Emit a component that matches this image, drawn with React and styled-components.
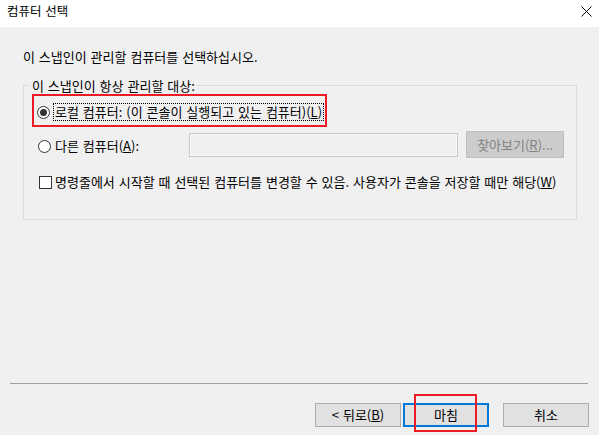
import React from 'react';
import styled, { createGlobalStyle } from 'styled-components';

const GlobalStyle = createGlobalStyle`
  html, body {
    margin: 0;
    padding: 0;
    background: #f0f0f0;
  }
  body {
    font-family: 'Noto Sans CJK KR', 'Malgun Gothic', sans-serif;
    font-size: 13px;
    word-spacing: 1px;
    color: #000;
  }
`;

const StyledWindow = styled.div`
  width: 599px;
  height: 435px;
  display: flex;
  flex-direction: column;
  background: #f0f0f0;
  overflow: hidden;
`;

const TitleBar = styled.div`
  height: 27px;
  flex: 0 0 27px;
  background: #fff;
  display: flex;
  align-items: center;
  justify-content: space-between;
  padding: 0 7px 5px 7px;
  box-sizing: border-box;
  font-size: 12.5px;
  line-height: 16px;
`;

const CloseIcon = styled.svg`
  width: 11px;
  height: 11px;
`;

const Body = styled.div`
  flex: 1;
  display: flex;
  flex-direction: column;
  padding: 0 22px 0 23px;
`;

const Instruction = styled.div`
  margin-top: 22px;
  line-height: 16px;
`;

const Group = styled.div`
  margin-top: 20px;
  height: 135px;
  box-sizing: border-box;
  border: 1px solid #dcdcdc;
  padding: 0 8px;
  display: flex;
  flex-direction: column;
  align-items: flex-start;
`;

const Legend = styled.div`
  margin: -8px 0 0 -2px;
  padding: 0 2px;
  line-height: 16px;
  background: #f0f0f0;
`;

// annotation box drawn around the focused option
const RedMark = styled.div`
  display: flex;
  align-items: center;
  border: 2px solid #ec1c24;
  padding: 7px 1px 4px 3px;
`;

const Radio = styled.span`
  width: 13px;
  height: 13px;
  flex: 0 0 13px;
  box-sizing: border-box;
  border: 1px solid #333;
  border-radius: 50%;
  background: #fff;
  display: inline-flex;
  align-items: center;
  justify-content: center;

  &::after {
    content: '';
    display: ${(p) => (p.$checked ? 'block' : 'none')};
    width: 7px;
    height: 7px;
    border-radius: 50%;
    background: #333;
  }
`;

const FocusLabel = styled.span`
  margin-left: 3px;
  border: 1px dotted #000;
  padding: 0 1px;
  line-height: 16px;
  white-space: nowrap;
`;

const OptionRow = styled.div`
  display: flex;
  align-items: center;
  margin-top: ${(p) => p.$top || 0}px;
  height: ${(p) => p.$height || 16}px;
  width: 100%;
`;

const RadioArea = styled.div`
  display: flex;
  align-items: center;
  width: 151px;
  margin: 3px 0 0 6px;
`;

const Label = styled.span`
  margin-left: 4px;
  line-height: 16px;
  white-space: nowrap;
`;

const TextInput = styled.div`
  width: 269px;
  height: 24px;
  box-sizing: border-box;
  border: 1px solid #c8c8c8;
  box-shadow: inset 0 0 0 1px #fafafa;
  background: #f0f0f0;
  margin-top: 1px;
`;

const DisabledButton = styled.div`
  width: 98px;
  height: 27px;
  margin-left: 8px;
  box-sizing: border-box;
  border: 1px solid #bfbfbf;
  background: #cccccc;
  color: #838383;
  display: flex;
  align-items: center;
  justify-content: center;
  line-height: 16px;
`;

const CheckBox = styled.span`
  width: 13px;
  height: 13px;
  flex: 0 0 13px;
  box-sizing: border-box;
  border: 1px solid #333;
  background: #fff;
  margin-left: 7px;
`;

const CheckLabel = styled.span`
  margin-left: 3px;
  line-height: 16px;
  white-space: nowrap;
`;

const Footer = styled.div`
  flex: 0 0 auto;
  padding-bottom: 8px;
`;

const Separator = styled.div`
  margin: 0 11px 0 10px;
  border-top: 1px solid #a0a0a0;
`;

const ButtonRow = styled.div`
  display: flex;
  justify-content: flex-end;
  margin-top: 19px;
  padding-right: 10px;
`;

const Button = styled.div`
  position: relative;
  width: 86px;
  height: 24px;
  box-sizing: border-box;
  margin-left: ${(p) => p.$gap || 0}px;
  border: ${(p) => (p.$default ? '2px solid #0078d7' : '1px solid #adadad')};
  background: #e1e1e1;
  display: flex;
  align-items: center;
  justify-content: center;
  line-height: 16px;
`;

// annotation box drawn over the finish button
const ButtonMark = styled.div`
  position: absolute;
  left: 9px;
  top: -11px;
  width: 63px;
  height: 38px;
  box-sizing: border-box;
  border: 2px solid #ec1c24;
  pointer-events: none;
`;

const App = () => {
  return (
    <>
      <GlobalStyle />
      <StyledWindow>
        <TitleBar>
          <span>컴퓨터 선택</span>
          <CloseIcon viewBox="0 0 11 11">
            <path d="M0.5 0.5 L10.5 10.5 M10.5 0.5 L0.5 10.5" stroke="#000" strokeWidth="1" fill="none" />
          </CloseIcon>
        </TitleBar>

        <Body>
          <Instruction>이 스냅인이 관리할 컴퓨터를 선택하십시오.</Instruction>

          <Group>
            <Legend>이 스냅인이 항상 관리할 대상:</Legend>

            <RedMark>
              <Radio $checked />
              <FocusLabel>
                로컬 컴퓨터: (이 콘솔이 실행되고 있는 컴퓨터)(<u>L</u>)
              </FocusLabel>
            </RedMark>

            <OptionRow $top={4} $height={27}>
              <RadioArea>
                <Radio />
                <Label>
                  다른 컴퓨터(<u>A</u>):
                </Label>
              </RadioArea>
              <TextInput />
              <DisabledButton>
                찾아보기(<u>R</u>)...
              </DisabledButton>
            </OptionRow>

            <OptionRow $top={16}>
              <CheckBox />
              <CheckLabel>
                명령줄에서 시작할 때 선택된 컴퓨터를 변경할 수 있음. 사용자가 콘솔을 저장할 때만 해당(<u>W</u>)
              </CheckLabel>
            </OptionRow>
          </Group>
        </Body>

        <Footer>
          <Separator />
          <ButtonRow>
            <Button>
              &lt; 뒤로(<u>B</u>)
            </Button>
            <Button $default $gap={2}>
              마침
              <ButtonMark />
            </Button>
            <Button $gap={14}>취소</Button>
          </ButtonRow>
        </Footer>
      </StyledWindow>
    </>
  );
};

export default App;
